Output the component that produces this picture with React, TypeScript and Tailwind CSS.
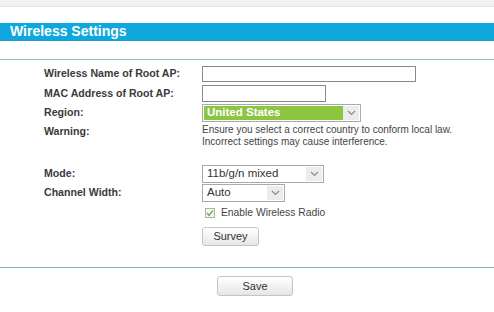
import React from "react";

const font = { fontFamily: '"Liberation Sans", Arial, sans-serif' };

function Chevron() {
  return (
    <svg width="9" height="6" viewBox="0 0 9 6" className="text-[#8a8a8a]">
      <path d="M1 1 L4.5 4.5 L8 1" fill="none" stroke="currentColor" strokeWidth="1.2" />
    </svg>
  );
}

function Select({ value, width, green }: { value: string; width: string; green?: boolean }) {
  return (
    <div className={`flex h-[18px] ${width} items-stretch border border-[#a9a9a9] bg-white p-px`}>
      <div
        className={`flex flex-1 items-center pl-[3px] text-[11.5px] ${
          green ? "bg-[#8cc540] font-bold text-white" : "text-[#333]"
        }`}
      >
        {value}
      </div>
      <div className="flex w-[16px] items-center justify-center bg-[#ececec]">
        <Chevron />
      </div>
    </div>
  );
}

function Label({ children }: { children: React.ReactNode }) {
  return <div className="text-[10.6px] font-bold text-[#3a3a3a]">{children}</div>;
}

export default function App() {
  return (
    <div className="h-[312px] w-[494px] overflow-hidden bg-white" style={font}>
      <div className="h-[7px] border-b border-[#e6e6e6] bg-[#f2f2f2]" />
      <div className="mt-[16px] flex h-[18px] items-center border-b border-[#2b9cc2] bg-[#0fa8de] pl-[10px]">
        <h1 className="text-[14px] font-bold text-white">Wireless Settings</h1>
      </div>
      <div className="mt-[18px] border-t border-[#8dbcc8]" />

      <div className="grid grid-cols-[158px_1fr] pl-[44px] pt-[6px]">
        <div className="flex h-[16px] items-center">
          <Label>Wireless Name of Root AP:</Label>
        </div>
        <div className="h-[16px] w-[214px] border border-[#8a8a8a]" />

        <div className="mt-[3px] flex h-[17px] items-center">
          <Label>MAC Address of Root AP:</Label>
        </div>
        <div className="mt-[3px] h-[17px] w-[124px] border border-[#8a8a8a]" />

        <div className="mt-[2px] flex h-[18px] items-center">
          <Label>Region:</Label>
        </div>
        <div className="mt-[2px]">
          <Select value="United States" width="w-[159px]" green />
        </div>

        <div className="mt-[2px]">
          <Label>Warning:</Label>
        </div>
        <div className="mt-[2px] text-[10px] leading-[12px] text-[#444]">
          Ensure you select a correct country to conform local law.
          <br />
          Incorrect settings may cause interference.
        </div>

        <div className="mt-[17px] flex h-[18px] items-center">
          <Label>Mode:</Label>
        </div>
        <div className="mt-[17px]">
          <Select value="11b/g/n mixed" width="w-[122px]" />
        </div>

        <div className="mt-[1px] flex h-[18px] items-center">
          <Label>Channel Width:</Label>
        </div>
        <div className="mt-[1px]">
          <Select value="Auto" width="w-[83px]" />
        </div>

        <div />
        <div className="mt-[3px] flex h-[15px] items-center gap-[6px] pl-[3px] text-[10.3px] text-[#444]">
          <svg width="10" height="10" viewBox="0 0 10 10">
            <rect x="0.5" y="0.5" width="9" height="9" fill="#f6f9f3" stroke="#a8b8a0" />
            <path d="M2 5 L4 7.5 L8 2.5" fill="none" stroke="#6aa84f" strokeWidth="1.3" />
          </svg>
          Enable Wireless Radio
        </div>

        <div />
        <div className="mt-[7px] flex">
          <button className="block h-[19px] w-[57px] rounded-[3px] border border-[#c4c4c4] bg-gradient-to-b from-white to-[#e6e6e6] text-[11px] text-[#333]">
            Survey
          </button>
        </div>
      </div>

      <div className="mt-[21px] border-t border-[#7fb6c2]" />
      <div className="flex pl-[217px] pt-[8px]">
        <button className="block h-[20px] w-[76px] rounded-[3px] border border-[#c4c4c4] bg-gradient-to-b from-white to-[#e6e6e6] text-[11px] text-[#333]">
          Save
        </button>
      </div>
    </div>
  );
}
